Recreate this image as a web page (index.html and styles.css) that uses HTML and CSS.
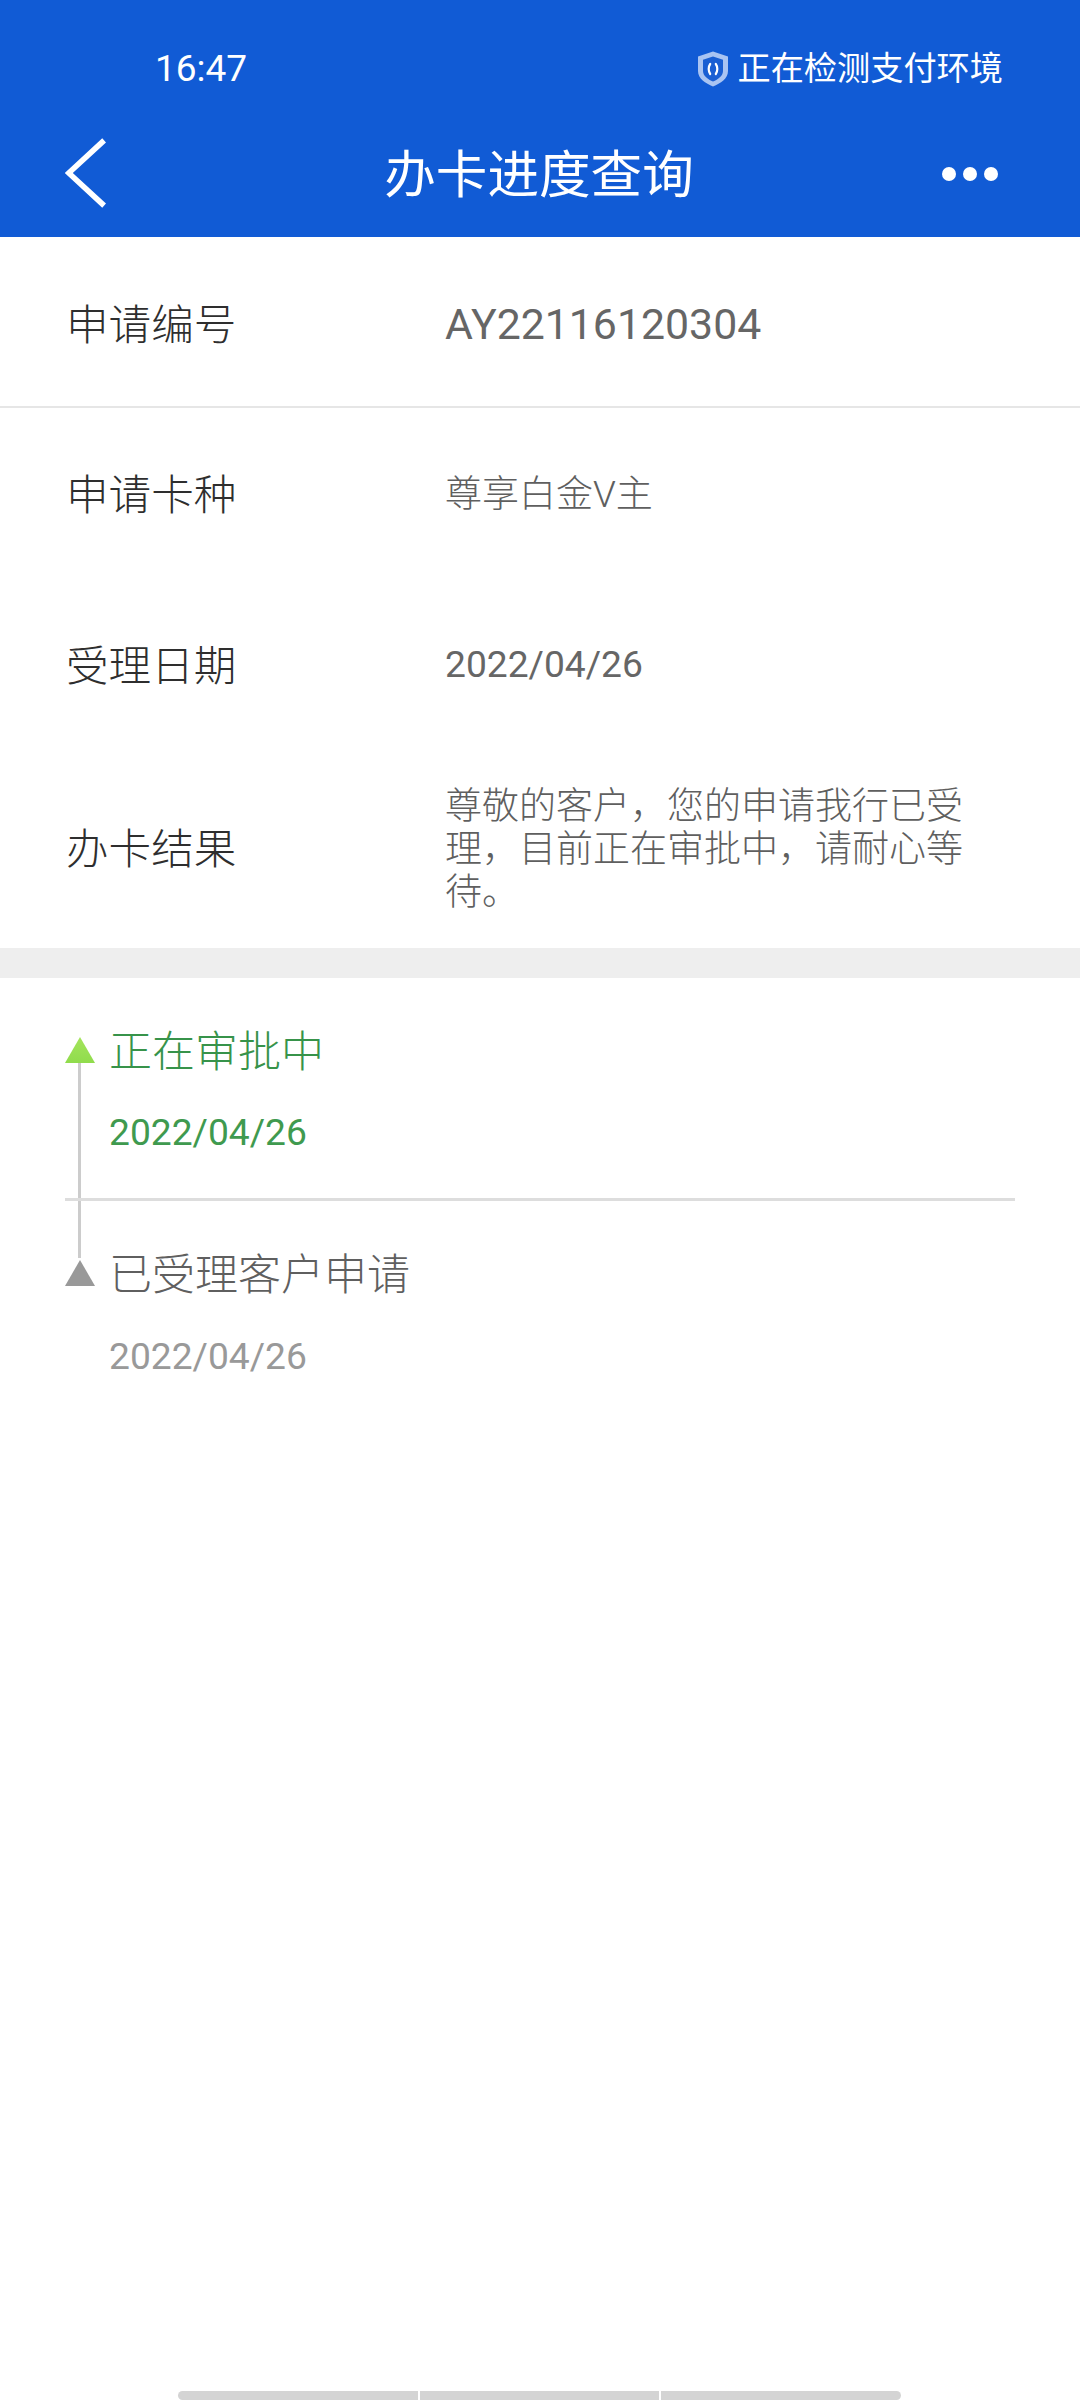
FILE: index.html
```html
<!DOCTYPE html>
<html lang="zh-CN">
<head>
<meta charset="utf-8">
<title>办卡进度查询</title>
<link rel="stylesheet" href="styles.css">
</head>
<body>
<div class="page">
  <header class="header">
    <div class="status">
      <span class="time">16:47</span>
      <div class="pay">
        <svg class="shield" viewBox="0 0 32 36" aria-hidden="true">
          <path d="M16 0.5 L31 5.5 V20 C31 27.5 23.5 32.5 16 35.5 C8.5 32.5 1 27.5 1 20 V5.5 Z" fill="#a9c4f2"/>
          <path d="M16 5.5 L26 8.8 V20 C26 24.8 21 28.5 16 30.5 C11 28.5 6 24.8 6 20 V8.8 Z" fill="#1a5fd3"/>
          <path d="M13.2 13 C11.2 15.8 11.2 20.2 13.2 23 M18.8 13 C20.8 15.8 20.8 20.2 18.8 23" fill="none" stroke="#fff" stroke-width="2.2" stroke-linecap="round"/>
        </svg>
        <span class="pay-text">正在检测支付环境</span>
      </div>
    </div>
    <div class="nav">
      <svg class="back" viewBox="0 0 44 76" aria-hidden="true">
        <path d="M42 3 L4 38 L42 73" fill="none" stroke="#fff" stroke-width="6"/>
      </svg>
      <h1 class="title">办卡进度查询</h1>
      <div class="more"><i></i><i></i><i></i></div>
    </div>
  </header>

  <section class="info">
    <div class="row row-id">
      <span class="label">申请编号</span>
      <span class="value value-id">AY22116120304</span>
    </div>
    <div class="row row-card">
      <span class="label">申请卡种</span>
      <span class="value">尊享白金V主</span>
    </div>
    <div class="row row-date">
      <span class="label">受理日期</span>
      <span class="value value-date">2022/04/26</span>
    </div>
    <div class="row row-result">
      <span class="label">办卡结果</span>
      <span class="value">尊敬的客户，您的申请我行已受理，目前正在审批中，请耐心等待。</span>
    </div>
  </section>

  <div class="band"></div>

  <section class="timeline">
    <div class="connector"></div>
    <div class="step step-active">
      <div class="step-head"><span class="tri"></span><span class="step-title">正在审批中</span></div>
      <div class="step-date">2022/04/26</div>
    </div>
    <div class="step step-done">
      <div class="step-head"><span class="tri"></span><span class="step-title">已受理客户申请</span></div>
      <div class="step-date">2022/04/26</div>
    </div>
  </section>

  <div class="spacer"></div>

  <div class="tabs"><i></i><i></i><i></i></div>
</div>
</body>
</html>
```
FILE: styles.css
```css
* { box-sizing: border-box; }
html, body { margin: 0; padding: 0; background: #fff; }
body { font-family: Roboto, "Noto Sans CJK SC", sans-serif; font-weight: 300; }
.page { width: 1080px; height: 2400px; display: flex; flex-direction: column; }

.header { height: 237px; background: #115bd5; color: #fff; flex: none; display: flex; flex-direction: column; }
.status { height: 105px; padding: 33px 77px 0 155px; display: flex; justify-content: space-between; align-items: center; }
.time { font-size: 37px; line-height: 72px; font-weight: 400; }
.pay { display: flex; align-items: center; gap: 9px; }
.shield { width: 32px; height: 36px; display: block; }
.pay-text { font-size: 33.2px; line-height: 72px; font-weight: 400; }

.nav { height: 132px; padding: 0 82px 0 65px; display: flex; align-items: center; justify-content: space-between; position: relative; }
.back { width: 41px; height: 72px; display: block; margin-top: 4px; }
.title { position: absolute; left: 0; right: 0; top: 0; margin: 0; padding-right: 2px; text-align: center; font-size: 51.6px; line-height: 142px; font-weight: 400; }
.more { display: flex; gap: 7px; margin-top: 5px; }
.more i { width: 14px; height: 14px; border-radius: 50%; background: #fff; display: block; }

.info { flex: none; }
.row { display: flex; align-items: center; padding-left: 66px; }
.row-id { height: 171px; border-bottom: 2px solid #e6e6e6; padding-top: 6px; }
.row-card { height: 171px; padding-top: 2px; }
.row-date { height: 171px; padding-top: 2px; }
.row-result { height: 198px; }
.label { width: 379px; flex: none; font-size: 42.6px; line-height: 60px; color: #2e2e2e; }
.value { width: 530px; flex: none; font-size: 37px; line-height: 43px; color: #5f5f5f; }
.value-id { font-size: 42.8px; font-weight: 400; color: #666; }
.value-date { font-size: 37.2px; font-weight: 400; color: #666; margin-top: -2px; }

.band { height: 30px; background: #eee; flex: none; }

.timeline { position: relative; padding: 0 65px; flex: none; }
.connector { position: absolute; left: 78px; top: 84px; width: 3px; height: 196px; background: #ccc; }
.step { position: relative; }
.step-active { height: 223px; padding-top: 42px; border-bottom: 3px solid #ddd; }
.step-done { height: 220px; padding-top: 42px; }
.step-head { display: flex; align-items: center; height: 60px; }
.tri { width: 30px; height: 26px; flex: none; clip-path: polygon(50% 0, 100% 100%, 0 100%); margin-right: 14px; }
.step-active .tri { background: linear-gradient(#a4e45c, #90dc4c); }
.step-done .tri { background: #999; }
.step-title { font-size: 43px; line-height: 60px; margin-top: 3px; }
.step-date { font-size: 37.2px; font-weight: 400; line-height: 43px; margin: 31px 0 0 44px; }
.step-done .step-date { margin-top: 32px; }
.step-active .step-title { color: #37934a; }
.step-active .step-date { color: #3f9a4f; }
.step-done .step-title { color: #5f5f5f; }
.step-done .step-date { color: #999; }

.spacer { flex: 1; }
.tabs { height: 9px; margin: 0 179px 0 178px; display: flex; gap: 2px; flex: none; }
.tabs i { flex: 1; background: #d4d4d4; display: block; }
.tabs i:first-child { border-radius: 5px 0 0 5px; }
.tabs i:last-child { border-radius: 0 5px 5px 0; }
```
